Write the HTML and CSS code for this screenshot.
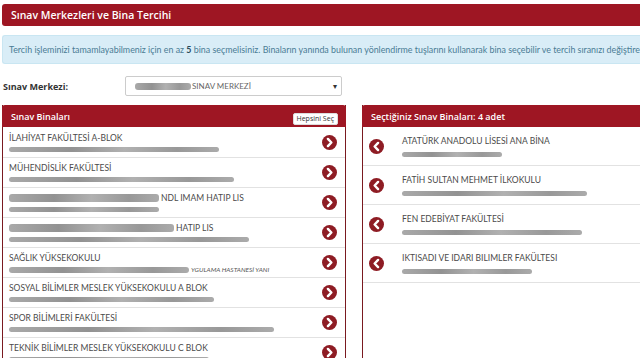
FILE: index.html
```html
<!DOCTYPE html>
<html lang="tr">
<head>
<meta charset="utf-8">
<link rel="stylesheet" href="styles.css">
</head>
<body>
<div class="page">
  <div class="title-bar">Sınav Merkezleri ve Bina Tercihi</div>
  <div class="alert">Tercih işleminizi tamamlayabilmeniz için en az <b>5</b> bina seçmelisiniz. Binaların yanında bulunan yönlendirme tuşlarını kullanarak bina seçebilir ve tercih sıranızı değiştirebilirsiniz.</div>
  <div class="form-row">
    <label class="form-label">Sınav Merkezi:</label>
    <div class="select"><span class="smear s-sel"></span><span class="sel-text">SINAV MERKEZİ</span><span class="caret">▾</span></div>
  </div>
  <div class="panels">
    <div class="panel left">
      <div class="panel-head"><span>Sınav Binaları</span><button class="btn-all">Hepsini Seç</button></div>
      <ul class="list">
        <li class="item"><div class="info"><div class="name">İLAHİYAT FAKÜLTESİ A-BLOK</div><div class="smear w1"></div></div><svg class="ico" viewBox="0 0 16 16"><circle cx="8" cy="8" r="8"/><path d="M6.3 4.2 L10 8 L6.3 11.8"/></svg></li>
        <li class="item"><div class="info"><div class="name">MÜHENDİSLİK FAKÜLTESİ</div><div class="smear w2"></div></div><svg class="ico" viewBox="0 0 16 16"><circle cx="8" cy="8" r="8"/><path d="M6.3 4.2 L10 8 L6.3 11.8"/></svg></li>
        <li class="item"><div class="info"><div class="name"><span class="smear inline w-a"></span>NDL IMAM HATIP LIS</div><div class="smear w3"></div></div><svg class="ico" viewBox="0 0 16 16"><circle cx="8" cy="8" r="8"/><path d="M6.3 4.2 L10 8 L6.3 11.8"/></svg></li>
        <li class="item"><div class="info"><div class="name"><span class="smear inline w-b"></span>HATIP LIS</div><div class="smear w4"></div></div><svg class="ico" viewBox="0 0 16 16"><circle cx="8" cy="8" r="8"/><path d="M6.3 4.2 L10 8 L6.3 11.8"/></svg></li>
        <li class="item"><div class="info"><div class="name">SAĞLIK YÜKSEKOKULU</div><div class="sub"><span class="smear inline w-c"></span><i>YGULAMA HASTANESİ YANI</i></div></div><svg class="ico" viewBox="0 0 16 16"><circle cx="8" cy="8" r="8"/><path d="M6.3 4.2 L10 8 L6.3 11.8"/></svg></li>
        <li class="item"><div class="info"><div class="name">SOSYAL BİLİMLER MESLEK YÜKSEKOKULU A BLOK</div><div class="smear w5"></div></div><svg class="ico" viewBox="0 0 16 16"><circle cx="8" cy="8" r="8"/><path d="M6.3 4.2 L10 8 L6.3 11.8"/></svg></li>
        <li class="item"><div class="info"><div class="name">SPOR BİLİMLERİ FAKÜLTESİ</div><div class="smear w6"></div></div><svg class="ico" viewBox="0 0 16 16"><circle cx="8" cy="8" r="8"/><path d="M6.3 4.2 L10 8 L6.3 11.8"/></svg></li>
        <li class="item"><div class="info"><div class="name">TEKNİK BİLİMLER MESLEK YÜKSEKOKULU C BLOK</div><div class="smear w7"></div></div><svg class="ico" viewBox="0 0 16 16"><circle cx="8" cy="8" r="8"/><path d="M6.3 4.2 L10 8 L6.3 11.8"/></svg></li>
      </ul>
    </div>
    <div class="panel right">
      <div class="panel-head"><span>Seçtiğiniz Sınav Binaları: 4 adet</span></div>
      <ul class="list">
        <li class="item sel"><svg class="ico" viewBox="0 0 16 16"><circle cx="8" cy="8" r="8"/><path d="M9.7 4.2 L6 8 L9.7 11.8"/></svg><div class="info"><div class="name">ATATÜRK ANADOLU LİSESİ ANA BİNA</div><div class="smear r1"></div></div></li>
        <li class="item sel"><svg class="ico" viewBox="0 0 16 16"><circle cx="8" cy="8" r="8"/><path d="M9.7 4.2 L6 8 L9.7 11.8"/></svg><div class="info"><div class="name">FATİH SULTAN MEHMET İLKOKULU</div><div class="smear r2"></div></div></li>
        <li class="item sel"><svg class="ico" viewBox="0 0 16 16"><circle cx="8" cy="8" r="8"/><path d="M9.7 4.2 L6 8 L9.7 11.8"/></svg><div class="info"><div class="name">FEN EDEBİYAT FAKÜLTESİ</div><div class="smear r3"></div></div></li>
        <li class="item sel"><svg class="ico" viewBox="0 0 16 16"><circle cx="8" cy="8" r="8"/><path d="M9.7 4.2 L6 8 L9.7 11.8"/></svg><div class="info"><div class="name">IKTISADI VE IDARI BILIMLER FAKÜLTESI</div><div class="smear r4"></div></div></li>
      </ul>
    </div>
  </div>
</div>
</body>
</html>
```

FILE: styles.css
```css
html, body {
  margin: 0;
  padding: 0;
  overflow: hidden;
  background: #fff;
}
body {
  width: 640px;
  height: 358px;
  font-family: Lato, "Open Sans", sans-serif;
  color: #444;
}
.page {
  width: 700px;
  padding: 4px 0 0 2px;
}
.title-bar {
  height: 22px;
  line-height: 22px;
  background: #9e1623;
  color: #fff;
  font-family: "Open Sans", sans-serif;
  font-weight: 600;
  font-size: 10.5px;
  padding-left: 9px;
  border-radius: 3px 0 0 3px;
}
.alert {
  margin-top: 9px;
  height: 27px;
  line-height: 28px;
  background: #d9edf7;
  border: 1px solid #c9e6f2;
  border-right: 0;
  color: #4a7c95;
  font-size: 8.85px;
  padding-left: 6px;
  white-space: nowrap;
  overflow: hidden;
  border-radius: 3px 0 0 3px;
}
.alert b {
  color: #2a4a5a;
  font-weight: 700;
}
.form-row {
  display: flex;
  align-items: center;
  margin-top: 12px;
  height: 20px;
}
.form-label {
  width: 122px;
  padding-left: 1px;
  font-family: "Open Sans", sans-serif;
  font-weight: 700;
  font-size: 9px;
  color: #333;
}
.select {
  width: 217px;
  height: 20px;
  box-sizing: border-box;
  border: 1px solid #ccc;
  border-radius: 2px;
  display: flex;
  align-items: center;
  padding-left: 9px;
  font-size: 8px;
  color: #666;
}
.sel-text {
  flex: 1;
}
.caret {
  font-size: 8px;
  color: #333;
  padding-right: 4px;
}
.panels {
  display: grid;
  grid-template-columns: 344px 320px;
  column-gap: 16px;
  margin-top: 9px;
}
.panel {
  border-left: 1px solid #7a1a20;
  border-right: 1px solid #7a1a20;
  height: 260px;
}
.panel-head {
  height: 22px;
  background: #9e1623;
  color: #fff;
  font-family: "Open Sans", sans-serif;
  font-weight: 600;
  font-size: 9px;
  display: flex;
  align-items: center;
  justify-content: space-between;
  padding: 0 8px 0 9px;
  border-radius: 3px 3px 0 0;
  margin: 0 -1px;
}
.btn-all {
  background: #fff;
  border: 1px solid #ddd;
  border-radius: 2px;
  font-family: "Open Sans", sans-serif;
  font-size: 7px;
  color: #333;
  height: 12px;
  line-height: 10px;
  padding: 0 3px;
  margin-top: 5px;
}
.list {
  list-style: none;
  margin: 0;
  padding: 0;
}
.item {
  display: flex;
  align-items: center;
  height: 30px;
  border-bottom: 1px solid #e2e2e2;
  padding: 0 6px 0 6px;
  box-sizing: border-box;
}
.item:first-child {
  height: 31px;
}
.info {
  flex: 1;
  display: flex;
  flex-direction: column;
  gap: 4px;
}
.name {
  font-size: 8.5px;
  color: #4a4a4a;
  white-space: nowrap;
  display: flex;
  align-items: center;
  height: 10px;
}
.sub {
  font-size: 6.5px;
  color: #555;
  display: flex;
  align-items: center;
  height: 5px;
}
.ico {
  width: 15px;
  height: 15px;
  flex: none;
  margin-right: 2px;
}
.ico circle {
  fill: #8e1c24;
}
.ico path {
  fill: none;
  stroke: #fff;
  stroke-width: 2.6;
  stroke-linecap: round;
  stroke-linejoin: round;
}
.smear {
  height: 5px;
  border-radius: 3px;
  background: linear-gradient(90deg, #9a9a9a, #7f7f7f 30%, #a3a3a3 55%, #868686 80%, #9c9c9c);
  opacity: 0.85;
}
.smear.inline {
  display: inline-block;
  height: 8px;
  margin-right: 2px;
}
.w1 { width: 210px; }
.w2 { width: 225px; }
.w3 { width: 150px; }
.w4 { width: 240px; }
.w5 { width: 205px; }
.w6 { width: 265px; }
.w7 { width: 200px; }
.w-a { width: 150px; }
.w-b { width: 165px; }
.w-c { width: 180px; height: 6px !important; }
.s-sel { width: 56px; height: 7px; margin-right: 1px; }
.item.sel {
  height: 39px;
  padding-left: 6px;
}
.item.sel .ico {
  margin-right: 18px;
}
.item.sel .info {
  gap: 6px;
}
.r1 { width: 100px; }
.r2 { width: 185px; }
.r3 { width: 180px; }
.r4 { width: 130px; }
```
